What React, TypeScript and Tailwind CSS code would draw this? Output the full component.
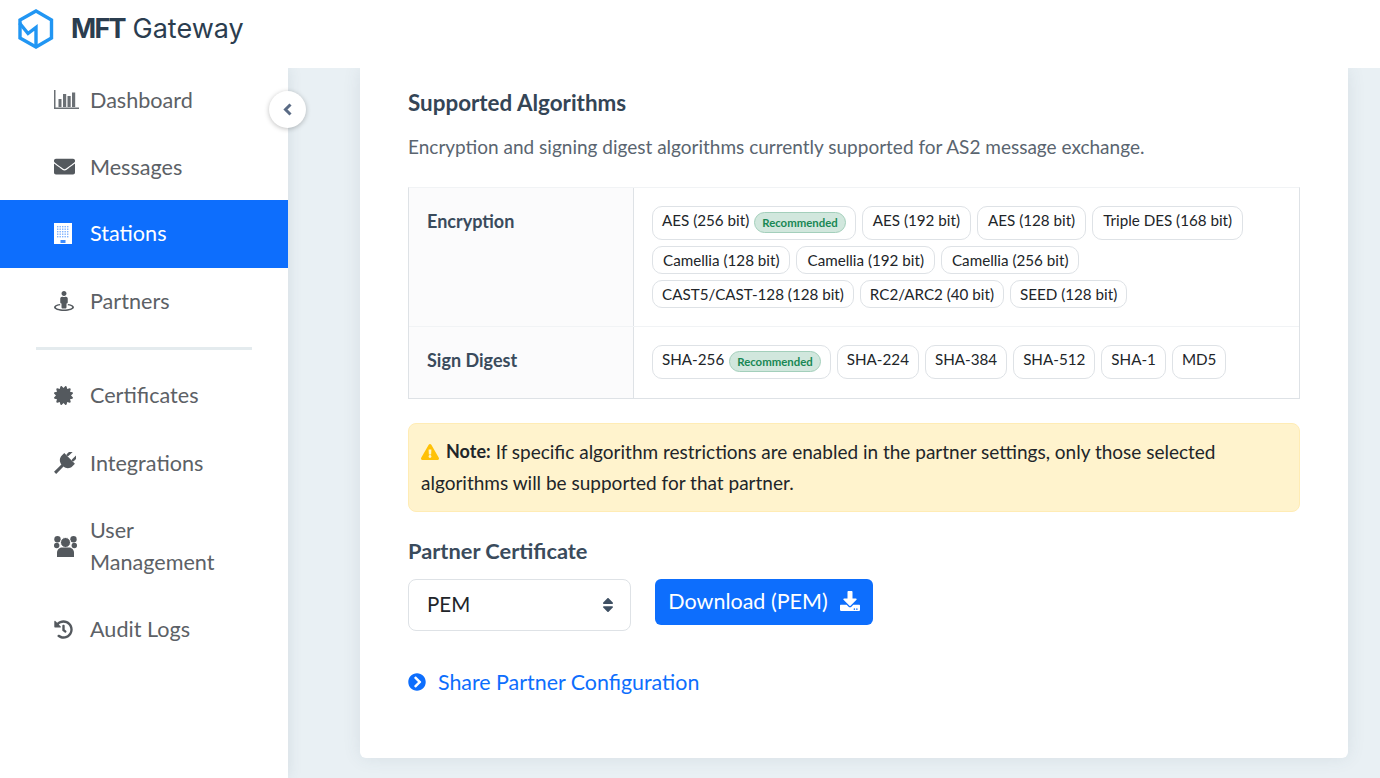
import { FaCertificate, FaChevronCircleRight, FaDownload, FaEnvelope, FaExclamationTriangle, FaHistory, FaSort, FaStreetView } from 'react-icons/fa';
import type { ReactNode } from 'react';

const font = "font-['Lato','Liberation_Sans',sans-serif]";

function ChartIcon() {
    return (
        <svg width="25" height="19" viewBox="0 0 25 19" fill="#6b7075">
            <path d="M0 0h1.500v17.500H25V19H0z" />
            <rect x="4.500" y="9" width="3" height="8" />
            <rect x="9" y="4" width="3.200" height="13" />
            <rect x="13.500" y="6" width="3.200" height="11" />
            <rect x="18" y="2.500" width="3.200" height="14.500" />
        </svg>
    );
}

function BuildingIcon() {
    const cols = [3, 5.5, 8, 10.5, 13];
    const rows = [3, 5.5, 8, 10.5, 13];
    return (
        <svg width="18" height="21" viewBox="0 0 18 21" fill="#ffffff">
            <rect width="18" height="21" />
            {rows.map((y) => cols.map((x) => <rect key={`${x}-${y}`} x={x} y={y} width="1.4" height="1.4" fill="#7fb2fe" />))}
            <rect x="6.500" y="17" width="5" height="3" fill="#3f8dfd" />
        </svg>
    );
}

function PlugIcon() {
    return (
        <svg width="22" height="22" viewBox="0 0 22 22" fill="#54595e">
            <g transform="rotate(45 11 11)">
                <rect x="6" y="-3" width="2.600" height="7.500" rx="1.200" />
                <rect x="13.400" y="-3" width="2.600" height="7.500" rx="1.200" />
                <path d="M3.500 4.500h15v3.500c0 3.800-2.800 6.200-6 6.600V25h-3V14.600c-3.200-.4-6-2.800-6-6.600z" />
            </g>
        </svg>
    );
}

function UsersIcon() {
    return (
        <svg width="23" height="21" viewBox="0 0 23 21" fill="#54595e">
            <circle cx="3.500" cy="3.200" r="3.200" />
            <circle cx="19.500" cy="3.200" r="3.200" />
            <circle cx="2.700" cy="9.500" r="2.700" />
            <circle cx="20.300" cy="9.500" r="2.700" />
            <circle cx="11.500" cy="6.500" r="5" stroke="#ffffff" strokeWidth="1" />
            <path d="M3 21v-4c0-4 3-5.500 5-5.500h7c2 0 5 1.500 5 5.500v4z" />
        </svg>
    );
}

function NavItem({ icon, label, active, className }: { icon: ReactNode; label: ReactNode; active?: boolean; className: string }) {
    return (
        <div className={`flex items-center pl-[54px] pr-[70px] ${className} ${active ? 'bg-[#0d6efd] text-white' : 'text-[#5c6166]'}`}>
            <span className="flex w-[36px] shrink-0 items-center text-[#54595e]">{icon}</span>
            <span className="text-[21.6px] leading-[32px]">{label}</span>
        </div>
    );
}

function Pill({ children, wide }: { children: ReactNode; wide?: boolean }) {
    return (
        <div className={`flex rounded-[10px] border border-[#dee2e6] pt-[2px] pb-[2px] text-[15.2px] leading-[22px] whitespace-nowrap text-[#212529] ${wide ? 'px-[10px]' : 'px-[9px]'}`}>
            {children}
        </div>
    );
}

function Recommended() {
    return (
        <span className="mt-[3px] mb-[4px] ml-[5px] h-[21px] rounded-full border border-[#a3cfbb] bg-[#d1e7dd] px-[7px] text-[11.4px] leading-[19px] font-bold text-[#198754]">
            Recommended
        </span>
    );
}

function PillRow({ children }: { children: ReactNode }) {
    return <div className="flex gap-[6px]">{children}</div>;
}

export default function App() {
    return (
        <div className={`flex h-[778px] w-[1380px] flex-col overflow-hidden bg-white ${font}`}>
            <header className="z-20 flex h-[68px] shrink-0 items-center bg-white pl-[18px]">
                <svg width="36" height="40" viewBox="0 0 36 40" fill="none" stroke="#2196f3" strokeWidth="3.4" className="mb-[11px]">
                    <path d="M18 2 L33.500 11 V29 L18 38 L2 29 V11 Z" />
                    <path d="M1.500 14 L10 24.500 L18 18.500 V37" />
                </svg>
                <span className="mb-[9px] ml-[17px] font-['Inter',sans-serif] text-[27px] text-[#2b3d4f]">
                    <b className="font-bold tracking-[-1.7px]">MFT</b> Gateway
                </span>
            </header>
            <div className="relative flex min-h-0 flex-1">
                <aside className="z-10 w-[288px] shrink-0 bg-white shadow-[0_0_14px_rgba(60,80,100,0.12)]">
                    <nav className="-mt-[2px]">
                        <NavItem icon={<ChartIcon />} label="Dashboard" className="h-[67px]" />
                        <NavItem icon={<FaEnvelope className="text-[21px]" />} label="Messages" className="h-[67px]" />
                        <NavItem icon={<BuildingIcon />} label="Stations" active className="h-[68px] pb-[2px]" />
                        <NavItem icon={<FaStreetView className="text-[20px]" />} label="Partners" className="h-[68px] pb-[2px]" />
                        <div className="mx-[36px] my-[11px] h-[3px] bg-[#e4ebee]" />
                        <NavItem icon={<FaCertificate className="text-[19px]" />} label="Certificates" className="h-[68px]" />
                        <NavItem icon={<PlugIcon />} label="Integrations" className="h-[68px]" />
                        <NavItem icon={<UsersIcon />} label="User Management" className="h-[98px]" />
                        <NavItem icon={<FaHistory className="text-[19px]" />} label="Audit Logs" className="h-[68px]" />
                    </nav>
                </aside>
                <button className="absolute top-[23px] left-[269px] z-10 flex h-[37px] w-[37px] items-center justify-center rounded-full bg-white shadow-[0_1px_5px_rgba(0,0,0,0.25)]">
                    <svg width="10" height="13" viewBox="0 0 10 13" fill="none" stroke="#5a6b85" strokeWidth="3">
                        <path d="M7.500 1.500 L2.500 6.500 L7.500 11.500" />
                    </svg>
                </button>
                <main className="min-w-0 flex-1 bg-[#e9f0f4] pr-[32px] pl-[72px]">
                    <section className="h-[690px] rounded-b-[6px] bg-white px-[48px] pt-[21px] shadow-[0_0_18px_rgba(60,80,100,0.1)]">
                        <h2 className="text-[22.4px] leading-[28px] font-bold text-[#344556]">Supported Algorithms</h2>
                        <p className="mt-[16px] text-[19px] leading-[28px] text-[#5a6570]">
                            Encryption and signing digest algorithms currently supported for AS2 message exchange.
                        </p>
                        <div className="mt-[26px] border-x border-t border-b border-x-[#dee2e6] border-t-[#f1f3f5] border-b-[#dee2e6]">
                            <div className="flex h-[139px] border-b border-[#f1f3f5]">
                                <div className="w-[225px] shrink-0 border-r border-[#dee2e6] bg-[#fbfbfc] pt-[21px] pl-[18px] text-[18px] leading-[24px] font-bold text-[#3a4b5c]">
                                    Encryption
                                </div>
                                <div className="flex flex-col gap-[6px] pt-[18px] pl-[18px]">
                                    <PillRow>
                                        <Pill>AES (256 bit)<Recommended /></Pill>
                                        <Pill wide>AES (192 bit)</Pill>
                                        <Pill wide>AES (128 bit)</Pill>
                                        <Pill wide>Triple DES (168 bit)</Pill>
                                    </PillRow>
                                    <PillRow>
                                        <Pill wide>Camellia (128 bit)</Pill>
                                        <Pill wide>Camellia (192 bit)</Pill>
                                        <Pill wide>Camellia (256 bit)</Pill>
                                    </PillRow>
                                    <PillRow>
                                        <Pill>CAST5/CAST-128 (128 bit)</Pill>
                                        <Pill>RC2/ARC2 (40 bit)</Pill>
                                        <Pill>SEED (128 bit)</Pill>
                                    </PillRow>
                                </div>
                            </div>
                            <div className="flex h-[71px]">
                                <div className="w-[225px] shrink-0 border-r border-[#dee2e6] bg-[#fbfbfc] pt-[21px] pl-[18px] text-[18px] leading-[24px] font-bold text-[#3a4b5c]">
                                    Sign Digest
                                </div>
                                <div className="pt-[18px] pl-[18px]">
                                    <PillRow>
                                        <Pill>SHA-256<Recommended /></Pill>
                                        <Pill>SHA-224</Pill>
                                        <Pill>SHA-384</Pill>
                                        <Pill>SHA-512</Pill>
                                        <Pill>SHA-1</Pill>
                                        <Pill>MD5</Pill>
                                    </PillRow>
                                </div>
                            </div>
                        </div>
                        <div className="mt-[24px] h-[89px] rounded-[8px] border border-[#ffecb5] bg-[#fff3cd] px-[12px] pt-[12px] text-[19px] leading-[31px] text-[#212529]">
                            <div className="flex items-center">
                                <FaExclamationTriangle className="mr-[7px] text-[18px] text-[#ffc107]" />
                                <b className="mr-[5px] text-[18px]">Note:</b>
                                <span>If specific algorithm restrictions are enabled in the partner settings, only those selected</span>
                            </div>
                            <div>algorithms will be supported for that partner.</div>
                        </div>
                        <h3 className="mt-[25px] text-[21.8px] leading-[28px] font-bold text-[#3a4b5c]">Partner Certificate</h3>
                        <div className="mt-[14px] flex items-start gap-[24px]">
                            <div className="flex h-[52px] w-[223px] items-center justify-between rounded-[8px] border border-[#dee2e6] pr-[13px] pb-[2px] pl-[18px] text-[20.5px] text-[#212529]">
                                PEM
                                <FaSort className="mt-[2px] text-[18px] text-[#3f5063]" />
                            </div>
                            <button className="flex h-[46px] w-[218px] items-center justify-center gap-[12px] rounded-[6px] bg-[#0d6efd] pb-[2px] text-[21.5px] text-white">
                                Download (PEM)
                                <FaDownload className="text-[20px]" />
                            </button>
                        </div>
                        <div className="mt-[37px] flex items-center gap-[12px] text-[21.4px] leading-[28px] text-[#0d6efd]">
                            <FaChevronCircleRight className="text-[18px]" />
                            Share Partner Configuration
                        </div>
                    </section>
                </main>
            </div>
        </div>
    );
}
